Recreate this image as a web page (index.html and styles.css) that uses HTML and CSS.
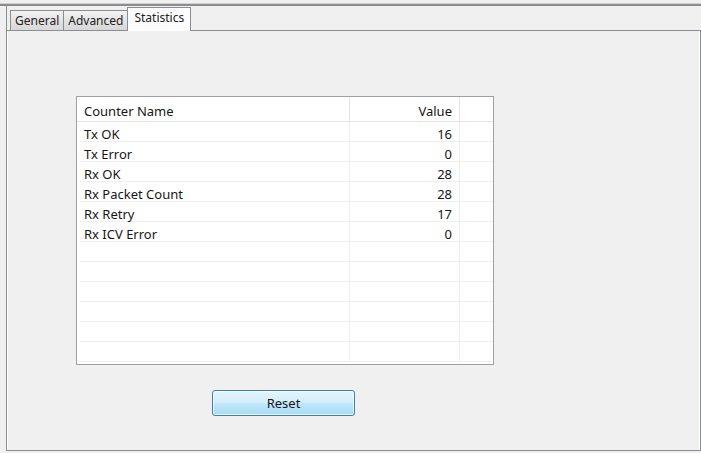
FILE: index.html
```html
<!DOCTYPE html>
<html lang="en">
<head>
  <meta charset="UTF-8">
  <title>Statistics</title>
  <link rel="stylesheet" href="styles.css">
</head>
<body>

<div class="topline"></div>

<div class="window">
  <div class="tabstrip">
    <div class="tab">General</div>
    <div class="tab">Advanced</div>
    <div class="tab active">Statistics</div>
  </div>

  <div class="panel">
    <div class="listview">
      <div class="lv-row lv-header">
        <div class="cell name">Counter Name</div>
        <div class="cell value">Value</div>
        <div class="cell filler"></div>
      </div>
      <div class="lv-body" id="rows"></div>
    </div>

    <button class="btn">Reset</button>
  </div>
</div>

<script>
  const counters = [
    ["Tx OK", 16],
    ["Tx Error", 0],
    ["Rx OK", 28],
    ["Rx Packet Count", 28],
    ["Rx Retry", 17],
    ["Rx ICV Error", 0]
  ];

  const body = document.getElementById("rows");
  for (let i = 0; i < 12; i++) {
    const c = counters[i] || ["", ""];
    const row = document.createElement("div");
    row.className = "lv-row";
    row.innerHTML =
      '<div class="cell name">' + c[0] + '</div>' +
      '<div class="cell value">' + c[1] + '</div>' +
      '<div class="cell filler"></div>';
    body.appendChild(row);
  }
</script>

</body>
</html>
```

FILE: styles.css
```css
html, body {
  margin: 0;
  height: 100%;
}

body {
  font-family: "Noto Sans", "DejaVu Sans", sans-serif;
  font-size: 13px;
  color: #161616;
  background: #f0f0f0;
  overflow: hidden;
}

.topline {
  height: 2px;
  margin-top: 3px;
  background: #8c8c8c;
  border-top: 1px solid #d2d2d2;
}

.window {
  margin-left: 6px;
  border-left: 1px solid #8a8d94;
  height: 445px;
  display: flex;
  flex-direction: column;
}

.tabstrip {
  display: flex;
  align-items: flex-end;
  height: 24px;
  padding-left: 3px;
  font-size: 12px;
}

.tab {
  height: 19px;
  line-height: 20px;
  padding: 0 4px;
  border: 1px solid #8a8d94;
  border-bottom: none;
  margin-right: -1px;
  background: linear-gradient(#f3f3f3, #e3e3e3 50%, #d8d8d8);
  color: #222;
}

.tab.active {
  position: relative;
  z-index: 1;
  height: 23px;
  line-height: 20px;
  padding: 0 6px;
  margin-bottom: -1px;
  background: #fcfcfc;
}

.panel {
  flex: 1;
  border-top: 1px solid #8a8d94;
  border-right: 1px solid #8a8d94;
  border-bottom: 1px solid #8a8d94;
  box-shadow: inset 1px 0 #fff, inset -1px 0 #fff;
  background: #f0f0f0;
  padding: 65px 0 0 69px;
  display: flex;
  flex-direction: column;
  align-items: flex-start;
}

.listview {
  width: 416px;
  height: 267px;
  border: 1px solid #a0a0a0;
  background: #fff;
  overflow: hidden;
}

.lv-row {
  display: flex;
  box-sizing: border-box;
  height: 20px;
  line-height: 16px;
  border-bottom: 1px solid #efefef;
  margin-left: 3px;
}

.lv-header {
  height: 25px;
  margin-left: 0;
  border-bottom: 1px solid #e3e3e3;
}

.cell {
  box-sizing: border-box;
  white-space: nowrap;
  padding-top: 4px;
}

.lv-header .cell {
  padding-top: 6px;
}

.name {
  width: 273px;
  padding-left: 7px;
  border-right: 1px solid #f2f2f2;
}

.lv-row:not(.lv-header) .name {
  width: 270px;
  padding-left: 4px;
}

.value {
  width: 110px;
  padding-right: 7px;
  text-align: right;
  border-right: 1px solid #ededed;
}

.lv-header .name,
.lv-header .value {
  border-right-color: #e3e3e3;
}

.filler {
  flex: 1;
}

.btn {
  margin: 25px 0 0 136px;
  width: 143px;
  height: 26px;
  border: 1px solid #3c7fb1;
  border-radius: 3px;
  background: linear-gradient(#e5f4fc, #d3eefb 45%, #bfe5f9 55%, #a9dbf6);
  box-shadow: inset 0 0 0 1px rgba(255, 255, 255, 0.7);
  font-family: inherit;
  font-size: 13px;
  color: #161616;
  padding: 0;
}
```
